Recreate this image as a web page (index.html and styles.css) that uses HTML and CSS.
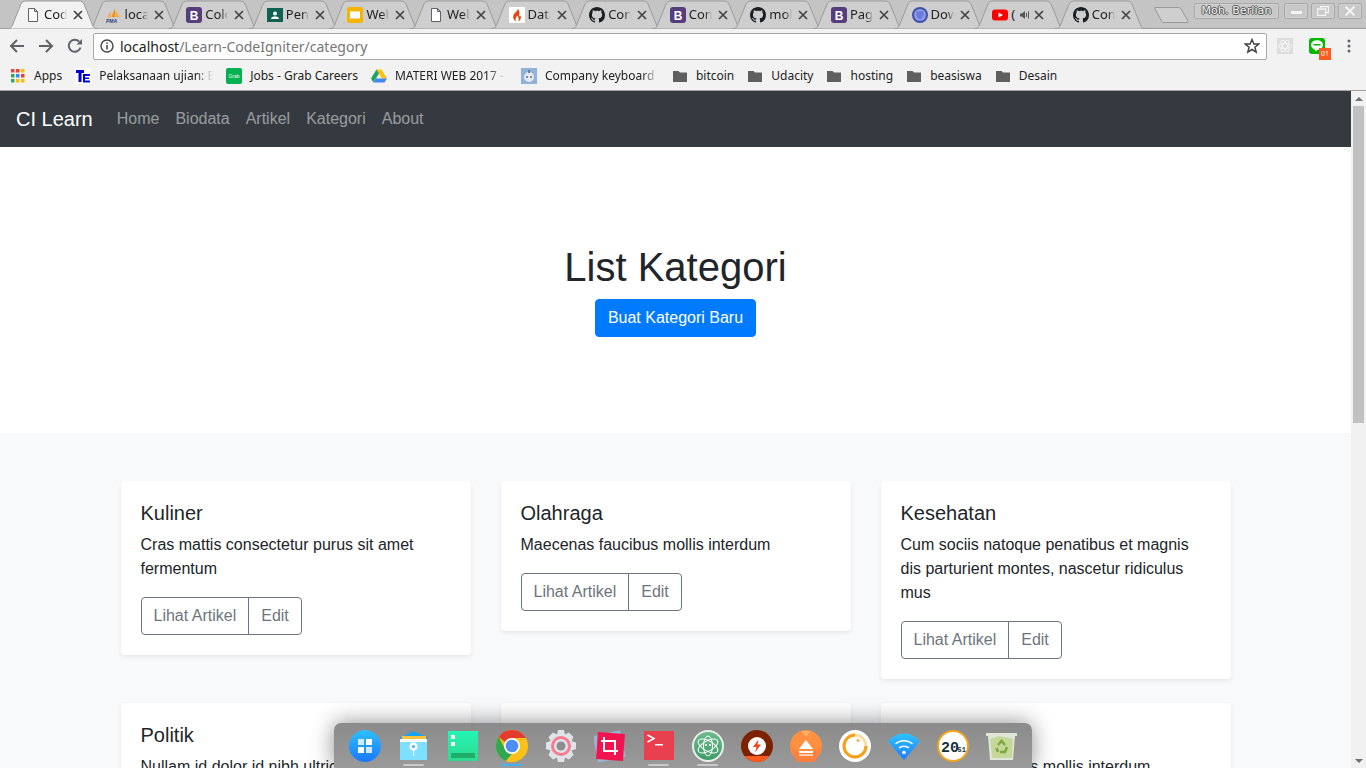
FILE: index.html
```html
<!DOCTYPE html>
<html lang="id">
<head>
<meta charset="utf-8">
<title>List Kategori</title>
<link rel="stylesheet" href="styles.css">
</head>
<body>
<svg class="defs" width="0" height="0" aria-hidden="true">
  <defs>
    <symbol id="tabshape" viewBox="0 0 91 29" preserveAspectRatio="none"><path d="M0 29C3 29 4.500 27.500 5.500 25L14 4C15 2 16.500 1 19 1H72C74.500 1 76 2 77 4L85.500 25C86.500 27.500 88 29 91 29Z"/></symbol>
    <symbol id="doc" viewBox="0 0 16 16"><path d="M3.500 1.500H9.500L12.500 4.500V14.500H3.500Z M9.500 1.500V4.500H12.500" fill="#fff" stroke="#5f6368" stroke-width="1"/></symbol>
    <symbol id="pma" viewBox="0 0 16 16"><path d="M1 10L5 4V10Z" fill="#f8a94a"/><path d="M5.500 10L9 1V10Z" fill="#f29111"/><path d="M9.500 10V3L13 10Z" fill="#f6a740"/><path d="M13 6L15.500 10H13.500Z" fill="#f8b766"/><text x="0" y="15.500" class="pmatext">PMA</text></symbol>
    <symbol id="boot" viewBox="0 0 16 16"><rect width="16" height="16" rx="3" fill="#563d7c"/><text x="8" y="12.500" class="boottext">B</text></symbol>
    <symbol id="room" viewBox="0 0 16 16"><rect y="1" width="16" height="14" fill="#0f6152"/><circle cx="8" cy="6.500" r="2" fill="#fff"/><path d="M4 12C4 10 6 9.500 8 9.500S12 10 12 12Z" fill="#fff"/></symbol>
    <symbol id="slides" viewBox="0 0 16 16"><rect width="16" height="16" rx="2.500" fill="#f4b400"/><rect x="3" y="4.500" width="10" height="7" fill="#fff"/></symbol>
    <symbol id="flame" viewBox="0 0 16 16"><rect width="16" height="16" fill="#fff"/><path d="M8.500 1.500C9.500 4 6 5 4.500 8C3.500 10.500 5 13.500 7 14.500C6 12.500 6.500 10.500 8.500 8.500C8.500 10 10.500 10.500 9.500 14.500C11.500 13.500 12.500 11 11.500 8.500C11 9.500 10.500 9.500 10 9C11 6 10.500 3.500 8.500 1.500Z" fill="#dd4814"/></symbol>
    <symbol id="github" viewBox="0 0 16 16"><path fill="#1b1f23" d="M8 0C3.580 0 0 3.580 0 8c0 3.540 2.290 6.530 5.470 7.590.4.070.55-.17.55-.38 0-.19-.01-.82-.01-1.490-2.010.37-2.530-.49-2.690-.94-.09-.23-.48-.94-.82-1.130-.28-.15-.68-.52-.01-.53.63-.01 1.080.58 1.230.82.72 1.210 1.870.87 2.330.66.07-.52.28-.87.51-1.070-1.780-.2-3.640-.89-3.640-3.950 0-.87.31-1.590.82-2.150-.08-.2-.36-1.020.08-2.120 0 0 .67-.21 2.200.82.64-.18 1.320-.27 2-.27.68 0 1.360.09 2 .27 1.530-1.040 2.200-.82 2.200-.82.44 1.100.16 1.920.08 2.120.51.56.82 1.270.82 2.150 0 3.070-1.870 3.750-3.650 3.950.29.25.54.73.54 1.480 0 1.070-.01 1.930-.01 2.200 0 .21.15.46.55.38A8.013 8.013 0 0016 8c0-4.420-3.580-8-8-8z"/></symbol>
    <symbol id="globe" viewBox="0 0 16 16"><circle cx="8" cy="8" r="8" fill="#3f4fa8"/><circle cx="8" cy="8" r="6" fill="#8f9be8"/><path d="M5 4.500L10.500 4L12 7.500L9 12.500L6 11.500L4 8Z" fill="#6c7adb"/></symbol>
    <symbol id="yt" viewBox="0 0 16 16"><rect y="2.500" width="16" height="11" rx="3" fill="#f00"/><path d="M6.500 5.500L11 8L6.500 10.500Z" fill="#fff"/></symbol>
    <symbol id="x" viewBox="0 0 10 10"><path d="M1 1L9 9M9 1L1 9" stroke="#444" stroke-width="1.700" fill="none"/></symbol>
    <symbol id="folder" viewBox="0 0 16 16"><path d="M1 3H6.500L8 4.500H15V14H1Z" fill="#5f5f5f"/></symbol>

    <symbol id="d-launch" viewBox="0 0 32 32"><defs><linearGradient id="g1" x1="0" y1="0" x2="0" y2="1"><stop offset="0" stop-color="#2cc0ff"/><stop offset="1" stop-color="#1a78ff"/></linearGradient></defs><circle cx="16" cy="16" r="16" fill="url(#g1)"/><rect x="9" y="9" width="6" height="6" fill="#cfeaff"/><rect x="17" y="9" width="6" height="6" fill="#fff"/><rect x="9" y="17" width="6" height="6" fill="#fff"/><rect x="17" y="17" width="6" height="6" fill="#cfeaff"/></symbol>
    <symbol id="d-files" viewBox="0 0 32 32"><path d="M2 8L15 1L29 7V28H2Z" fill="#16a3f5"/><rect x="4" y="6" width="24" height="4" fill="#f6c33c"/><rect x="2" y="9" width="27" height="21" fill="#7ee0ff"/><rect x="2" y="9" width="27" height="3" fill="#fff"/><circle cx="15.500" cy="16.500" r="4" fill="#fff"/><circle cx="15.500" cy="16.500" r="1.500" fill="#3fb4e0"/><rect x="15" y="20" width="1.200" height="6" fill="#fff"/></symbol>
    <symbol id="d-panel" viewBox="0 0 32 32"><defs><linearGradient id="g2" x1="0" y1="0" x2="0" y2="1"><stop offset="0" stop-color="#22f5b4"/><stop offset="1" stop-color="#30d98f"/></linearGradient></defs><rect x="1" y="1" width="30" height="30" fill="url(#g2)"/><rect x="4" y="5" width="4" height="4" fill="#fff"/><rect x="4" y="12" width="4" height="4" fill="#fff"/><rect x="4" y="23" width="24" height="5" fill="#20ad6b"/></symbol>
    <symbol id="d-chrome" viewBox="0 0 32 32"><circle cx="16" cy="16" r="16" fill="#fbc116"/><path d="M16 0A16 16 0 0 1 29.860 8H16A8 8 0 0 0 9 12L2.800 7A16 16 0 0 1 16 0Z" fill="#e33b2e"/><path d="M2.800 7L9.500 20A8 8 0 0 0 16 24L10 31A16 16 0 0 1 2.800 7Z" fill="#2fa84f"/><path d="M10 31L16 24A8 8 0 0 0 23 12H29.860A16 16 0 0 1 14 32Z" fill="#fbc116"/><circle cx="16" cy="16" r="8" fill="#fff"/><circle cx="16" cy="16" r="6.300" fill="#4c8ef5"/></symbol>
    <symbol id="d-gear" viewBox="0 0 32 32"><path d="M13 0H19L20 4.500L24 2.500L28.500 7L26.500 11L31 12.500V19L26.500 20.500L28.500 25L24 29.500L20 27.500L19 32H13L12 27.500L8 29.500L3.500 25L5.500 20.500L1 19V12.500L5.500 11L3.500 7L8 2.500L12 4.500Z" fill="#dfe3ea"/><circle cx="16" cy="16" r="10" fill="#f77d8e"/><circle cx="16" cy="16" r="7" fill="#dfe3ea"/><circle cx="16" cy="16" r="4.500" fill="#8d8d8d"/></symbol>
    <symbol id="d-crop" viewBox="0 0 32 32"><rect x="1" y="3" width="28" height="27" fill="#9cc0e6" opacity=".75" transform="rotate(-12 15 16)"/><rect x="3" y="3" width="27" height="27" fill="#f2134f" transform="rotate(4 16 16)"/><path d="M10 7V21H24M7 11H21V25" stroke="#fff" stroke-width="2" fill="none"/></symbol>
    <symbol id="d-term" viewBox="0 0 32 32"><rect x="1" y="1" width="30" height="29" fill="#e8404f"/><path d="M4.500 5L11 8.500L4.500 12" stroke="#fff" stroke-width="1.500" fill="none"/><rect x="12" y="14" width="8" height="1.500" fill="#fff"/></symbol>
    <symbol id="d-atom" viewBox="0 0 32 32"><defs><linearGradient id="g3" x1="0" y1="0" x2="0" y2="1"><stop offset="0" stop-color="#6dbb8c"/><stop offset="1" stop-color="#3f9a68"/></linearGradient></defs><circle cx="16" cy="16" r="15" fill="url(#g3)" stroke="#e8efe9" stroke-width="2"/><g fill="none" stroke="#fff" stroke-width="1"><ellipse cx="16" cy="16" rx="11" ry="5" transform="rotate(30 16 16)"/><ellipse cx="16" cy="16" rx="11" ry="5" transform="rotate(-30 16 16)"/><ellipse cx="16" cy="16" rx="4.500" ry="10"/></g><circle cx="14" cy="15" r="1" fill="#fff"/><circle cx="18" cy="15" r="1" fill="#fff"/></symbol>
    <symbol id="d-bolt" viewBox="0 0 32 32"><clipPath id="c1"><circle cx="16" cy="16" r="16"/></clipPath><g clip-path="url(#c1)"><rect width="32" height="32" fill="#7c2200"/><rect y="26" width="32" height="6" fill="#ff5a1f"/></g><circle cx="16" cy="16" r="9" fill="#fff"/><path d="M17.500 9.500L12 17H15.500L14 22.500L20 14.500H16.500Z" fill="#f0421c"/></symbol>
    <symbol id="d-eject" viewBox="0 0 32 32"><circle cx="16" cy="16" r="16" fill="#ff9040"/><path d="M11 1H21L16 7Z" fill="#ffb066"/><path d="M0 16L6 32H26L32 16L24 22H8Z" fill="#ff7a3a" opacity=".7"/><path d="M16 10L23 19H9Z" fill="#fff"/><rect x="9" y="21" width="14" height="2" fill="#fff"/><rect x="9" y="24.500" width="14" height="1.200" fill="#fff"/></symbol>
    <symbol id="d-ring" viewBox="0 0 32 32"><circle cx="16" cy="16" r="16" fill="#fff"/><circle cx="16" cy="16" r="11" fill="none" stroke="#f8dfa8" stroke-width="3"/><path d="M16 5A11 11 0 1 0 27 16" fill="none" stroke="#f7a11a" stroke-width="3"/><circle cx="19" cy="10.500" r="1.300" fill="#f7a11a"/></symbol>
    <symbol id="d-wifi" viewBox="0 0 32 32"><defs><linearGradient id="g4" x1="0" y1="0" x2="0" y2="1"><stop offset="0" stop-color="#2cc4ff"/><stop offset="1" stop-color="#1d7bff"/></linearGradient></defs><path d="M0 11.500C4 6.500 10 3.500 16 3.500S28 6.500 32 11.500L16 30Z" fill="url(#g4)"/><g fill="none" stroke="#fff" stroke-width="1.500"><path d="M7.500 14C12 9.500 20 9.500 24.500 14"/><path d="M11 18C13.500 15.500 18.500 15.500 21 18"/></g><circle cx="16" cy="22.500" r="1.800" fill="#fff"/></symbol>
    <symbol id="d-clock" viewBox="0 0 32 32"><circle cx="16" cy="16" r="15" fill="#fff" stroke="#f4a51c" stroke-width="2"/><text x="4" y="22" class="clockbig">20</text><text x="20.500" y="22" class="clocksmall">51</text></symbol>
    <symbol id="d-trash" viewBox="0 0 32 32"><path d="M0 3H31V6H29L27 30H4L2 6H0Z" fill="#e8efe0" opacity=".9"/><path d="M4 9L13 6L27 9L26 28H6Z" fill="#b9d27f" opacity=".7"/><g fill="none" stroke="#7ea83f" stroke-width="2.500"><path d="M12 15L15.500 11L19 15"/><path d="M21 17L19 22H14"/><path d="M12 22L10.500 18"/></g></symbol>
  </defs>
</svg>

<div class="window">
  <header class="chrome">
    <div class="tabstrip">
      <div class="tabs">
        <div class="tab tab-active"><svg class="tabbg"><use href="#tabshape"/></svg><svg class="fav"><use href="#doc"/></svg><span class="tabtitle">Code</span><svg class="close"><use href="#x"/></svg></div>
        <div class="tab"><svg class="tabbg"><use href="#tabshape"/></svg><svg class="fav"><use href="#pma"/></svg><span class="tabtitle">local</span><svg class="close"><use href="#x"/></svg></div>
        <div class="tab"><svg class="tabbg"><use href="#tabshape"/></svg><svg class="fav"><use href="#boot"/></svg><span class="tabtitle">Color</span><svg class="close"><use href="#x"/></svg></div>
        <div class="tab"><svg class="tabbg"><use href="#tabshape"/></svg><svg class="fav"><use href="#room"/></svg><span class="tabtitle">Peng</span><svg class="close"><use href="#x"/></svg></div>
        <div class="tab"><svg class="tabbg"><use href="#tabshape"/></svg><svg class="fav"><use href="#slides"/></svg><span class="tabtitle">Web</span><svg class="close"><use href="#x"/></svg></div>
        <div class="tab"><svg class="tabbg"><use href="#tabshape"/></svg><svg class="fav"><use href="#doc"/></svg><span class="tabtitle">Web</span><svg class="close"><use href="#x"/></svg></div>
        <div class="tab"><svg class="tabbg"><use href="#tabshape"/></svg><svg class="fav"><use href="#flame"/></svg><span class="tabtitle">Data</span><svg class="close"><use href="#x"/></svg></div>
        <div class="tab"><svg class="tabbg"><use href="#tabshape"/></svg><svg class="fav"><use href="#github"/></svg><span class="tabtitle">Cont</span><svg class="close"><use href="#x"/></svg></div>
        <div class="tab"><svg class="tabbg"><use href="#tabshape"/></svg><svg class="fav"><use href="#boot"/></svg><span class="tabtitle">Cont</span><svg class="close"><use href="#x"/></svg></div>
        <div class="tab"><svg class="tabbg"><use href="#tabshape"/></svg><svg class="fav"><use href="#github"/></svg><span class="tabtitle">moh</span><svg class="close"><use href="#x"/></svg></div>
        <div class="tab"><svg class="tabbg"><use href="#tabshape"/></svg><svg class="fav"><use href="#boot"/></svg><span class="tabtitle">Page</span><svg class="close"><use href="#x"/></svg></div>
        <div class="tab"><svg class="tabbg"><use href="#tabshape"/></svg><svg class="fav"><use href="#globe"/></svg><span class="tabtitle">Down</span><svg class="close"><use href="#x"/></svg></div>
        <div class="tab"><svg class="tabbg"><use href="#tabshape"/></svg><svg class="fav"><use href="#yt"/></svg><span class="tabtitle tabtitle-short">(</span><svg class="speaker" viewBox="0 0 10 10"><path d="M0 3.500H2L5 1V9L2 6.500H0Z" fill="#555"/><path d="M6.500 3V7M8.500 1.500V8.500" stroke="#555"/></svg><svg class="close"><use href="#x"/></svg></div>
        <div class="tab"><svg class="tabbg"><use href="#tabshape"/></svg><svg class="fav"><use href="#github"/></svg><span class="tabtitle">Cont</span><svg class="close"><use href="#x"/></svg></div>
        <svg class="newtab" viewBox="0 0 36 18"><path d="M1 1.500H24C25.500 1.500 26.500 2 27 3L34 15C34.500 16 34 16.500 33 16.500H10C9 16.500 8 16 7.500 15L1 3C.5 2 .5 1.500 1 1.500Z" fill="#cfcfcf" stroke="#9a9a9a"/></svg>
      </div>
      <div class="winctrls">
        <div class="winbtn winbtn-user">Moh. Berlian</div>
        <div class="winbtn winbtn-min"><span class="glyph-min"></span></div>
        <div class="winbtn winbtn-res"><svg class="glyph" viewBox="0 0 12 10"><path d="M3.500 2.500V.5H11.500V6.500H8.500M.5 3H8.500V9.500H.5Z" fill="none" stroke="#f4f4f4" stroke-width="1.300"/></svg></div>
        <div class="winbtn winbtn-cls"><svg class="glyph" viewBox="0 0 12 10"><path d="M1.500 .5L10.500 9.500M10.500 .5L1.500 9.500" stroke="#f4f4f4" stroke-width="2"/></svg></div>
      </div>
    </div>

    <div class="toolbar">
      <svg class="navicon" viewBox="0 0 16 16"><path d="M15 8H2M8 2L2 8L8 14" fill="none" stroke="#5f6368" stroke-width="2"/></svg>
      <svg class="navicon" viewBox="0 0 16 16"><path d="M1 8H14M8 2L14 8L8 14" fill="none" stroke="#5f6368" stroke-width="2"/></svg>
      <svg class="navicon" viewBox="0 0 16 16"><path d="M13.500 9.500A6 6 0 1 1 12.200 3.700" fill="none" stroke="#5f6368" stroke-width="2"/><path d="M9.500 6.500H15V1Z" fill="#5f6368"/></svg>
      <div class="omnibox">
        <svg class="infoicon" viewBox="0 0 14 14"><circle cx="7" cy="7" r="6" fill="none" stroke="#444" stroke-width="1.400"/><rect x="6.300" y="6" width="1.500" height="4.500" fill="#444"/><rect x="6.300" y="3.500" width="1.500" height="1.500" fill="#444"/></svg>
        <span class="url"><span class="url-host">localhost</span>/Learn-CodeIgniter/category</span>
        <svg class="star" viewBox="0 0 16 16"><path d="M8 1.500L9.900 6H14.800L10.900 9.200L12.200 14.200L8 11.500L3.800 14.200L5.100 9.200L1.200 6H6.100Z" fill="none" stroke="#444" stroke-width="1.500"/></svg>
      </div>
      <div class="exts">
        <span class="ext ext-react"><svg viewBox="0 0 16 16" class="ext-svg"><rect width="16" height="16" fill="#dcdcdc"/><g fill="none" stroke="#f6f6f6"><ellipse cx="8" cy="8" rx="6.500" ry="2.500"/><ellipse cx="8" cy="8" rx="6.500" ry="2.500" transform="rotate(60 8 8)"/><ellipse cx="8" cy="8" rx="6.500" ry="2.500" transform="rotate(120 8 8)"/></g></svg></span>
        <span class="ext ext-line"><svg viewBox="0 0 16 16" class="ext-svg"><rect width="16" height="16" rx="3" fill="#00b900"/><ellipse cx="8" cy="7" rx="6" ry="4.800" fill="#fff"/><path d="M6 11H9L6.500 13.500Z" fill="#fff"/><rect x="4.500" y="6" width="7" height="1.500" fill="#00b900"/></svg><span class="badge">01</span></span>
        <svg class="dots" viewBox="0 0 4 16"><circle cx="2" cy="3" r="1.500" fill="#5f6368"/><circle cx="2" cy="8" r="1.500" fill="#5f6368"/><circle cx="2" cy="13" r="1.500" fill="#5f6368"/></svg>
      </div>
    </div>

    <nav class="bookmarks">
      <a class="bm"><svg class="bmicon" viewBox="0 0 16 16"><g><rect x="1" y="1" width="3.500" height="3.500" fill="#ea4335"/><rect x="6" y="1" width="3.500" height="3.500" fill="#ea4335"/><rect x="11" y="1" width="3.500" height="3.500" fill="#fbbc05"/><rect x="1" y="6" width="3.500" height="3.500" fill="#34a853"/><rect x="6" y="6" width="3.500" height="3.500" fill="#4285f4"/><rect x="11" y="6" width="3.500" height="3.500" fill="#ea4335"/><rect x="1" y="11" width="3.500" height="3.500" fill="#34a853"/><rect x="6" y="11" width="3.500" height="3.500" fill="#fbbc05"/><rect x="11" y="11" width="3.500" height="3.500" fill="#fbbc05"/></g></svg><span>Apps</span></a>
      <a class="bm"><svg class="bmicon" viewBox="0 0 16 16"><rect width="16" height="16" fill="#fff"/><path d="M1 2H9V5H6.500V14H3.500V5H1Z" fill="#0000d8"/><path d="M8 6H15V8H10V9.500H14V11H10V12.500H15V14.500H8Z" fill="#0000d8"/></svg><span class="bm-fade bm-w114">Pelaksanaan ujian: Bahasa</span></a>
      <a class="bm"><svg class="bmicon" viewBox="0 0 16 16"><rect width="16" height="16" rx="2" fill="#00b14f"/><text x="8" y="10" class="grabtext">Grab</text></svg><span>Jobs - Grab Careers</span></a>
      <a class="bm"><svg class="bmicon" viewBox="0 0 16 16"><path d="M5.500 1.500H10.500L16 10.500H11Z" fill="#ffc107"/><path d="M5.500 1.500L0 10.500L2.500 14.500L8 5.500Z" fill="#1fa463"/><path d="M2.500 14.500H13.500L16 10.500H5Z" fill="#4285f4"/></svg><span class="bm-fade bm-w110">MATERI WEB 2017 - 2018</span></a>
      <a class="bm bm-company"><svg class="bmicon" viewBox="0 0 16 16"><rect width="16" height="16" fill="#8fb2dc"/><circle cx="8" cy="9" r="5" fill="#e6eaf0"/><rect x="7" y="2" width="2" height="3" fill="#6b7d94"/><circle cx="6" cy="9" r="1" fill="#5a6b80"/><circle cx="10" cy="9" r="1" fill="#5a6b80"/></svg><span class="bm-fade bm-w114">Company keyboard t</span></a>
      <a class="bm"><svg class="bmicon"><use href="#folder"/></svg><span>bitcoin</span></a>
      <a class="bm"><svg class="bmicon"><use href="#folder"/></svg><span>Udacity</span></a>
      <a class="bm"><svg class="bmicon"><use href="#folder"/></svg><span>hosting</span></a>
      <a class="bm"><svg class="bmicon"><use href="#folder"/></svg><span>beasiswa</span></a>
      <a class="bm"><svg class="bmicon"><use href="#folder"/></svg><span>Desain</span></a>
    </nav>
  </header>

  <div class="viewport">
    <main class="page">
      <nav class="navbar">
        <a class="brand">CI Learn</a>
        <a class="navlink">Home</a>
        <a class="navlink">Biodata</a>
        <a class="navlink">Artikel</a>
        <a class="navlink">Kategori</a>
        <a class="navlink">About</a>
      </nav>
      <section class="jumbotron">
        <h1 class="jumbo-title">List Kategori</h1>
        <a class="btn-primary">Buat Kategori Baru</a>
      </section>
      <section class="album">
        <div class="grid">
          <article class="card"><h5 class="card-title">Kuliner</h5><p class="card-text">Cras mattis consectetur purus sit amet fermentum</p><div class="btn-group"><a class="btn">Lihat Artikel</a><a class="btn">Edit</a></div></article>
          <article class="card"><h5 class="card-title">Olahraga</h5><p class="card-text">Maecenas faucibus mollis interdum</p><div class="btn-group"><a class="btn">Lihat Artikel</a><a class="btn">Edit</a></div></article>
          <article class="card"><h5 class="card-title">Kesehatan</h5><p class="card-text">Cum sociis natoque penatibus et magnis dis parturient montes, nascetur ridiculus mus</p><div class="btn-group"><a class="btn">Lihat Artikel</a><a class="btn">Edit</a></div></article>
          <article class="card"><h5 class="card-title">Politik</h5><p class="card-text">Nullam id dolor id nibh ultricies vehicula ut id elit</p><div class="btn-group"><a class="btn">Lihat Artikel</a><a class="btn">Edit</a></div></article>
          <article class="card"><h5 class="card-title">Ekonomi</h5><p class="card-text">Cras mattis consectetur purus sit amet fermentum</p><div class="btn-group"><a class="btn">Lihat Artikel</a><a class="btn">Edit</a></div></article>
          <article class="card"><h5 class="card-title">Travel</h5><p class="card-text">Maecenas faucibus mollis interdum</p><div class="btn-group"><a class="btn">Lihat Artikel</a><a class="btn">Edit</a></div></article>
        </div>
      </section>
    </main>
    <aside class="scrollbar">
      <span class="arrow-up"></span>
      <span class="thumb"></span>
      <span class="arrow-down"></span>
    </aside>
  </div>

  <div class="dock">
    <span class="dockitem"><svg class="dockicon"><use href="#d-launch"/></svg></span>
    <span class="dockitem dockitem-on"><svg class="dockicon"><use href="#d-files"/></svg></span>
    <span class="dockitem"><svg class="dockicon"><use href="#d-panel"/></svg></span>
    <span class="dockitem dockitem-active"><svg class="dockicon"><use href="#d-chrome"/></svg></span>
    <span class="dockitem"><svg class="dockicon"><use href="#d-gear"/></svg></span>
    <span class="dockitem"><svg class="dockicon"><use href="#d-crop"/></svg></span>
    <span class="dockitem dockitem-on"><svg class="dockicon"><use href="#d-term"/></svg></span>
    <span class="dockitem dockitem-on"><svg class="dockicon"><use href="#d-atom"/></svg></span>
    <span class="dockitem"><svg class="dockicon"><use href="#d-bolt"/></svg></span>
    <span class="dockitem"><svg class="dockicon"><use href="#d-eject"/></svg></span>
    <span class="dockitem"><svg class="dockicon"><use href="#d-ring"/></svg></span>
    <span class="dockitem"><svg class="dockicon"><use href="#d-wifi"/></svg></span>
    <span class="dockitem"><svg class="dockicon"><use href="#d-clock"/></svg></span>
    <span class="dockitem"><svg class="dockicon"><use href="#d-trash"/></svg></span>
  </div>
</div>
</body>
</html>
```

FILE: styles.css
```css
* { box-sizing: border-box; }
html, body { margin: 0; height: 100%; overflow: hidden; }
body { font-family: "Liberation Sans", Arial, sans-serif; font-size: 16px; line-height: 1.5; color: #212529; background: #fff; }
.defs { position: absolute; }

.window { position: relative; height: 768px; display: flex; flex-direction: column; overflow: hidden; }

/* browser chrome */
.chrome { flex: none; height: 91px; font-family: "Noto Sans", sans-serif; background: #f2f2f2; border-bottom: 1px solid #a3a3a3; }
.tabstrip { height: 29px; display: flex; justify-content: space-between; background: #c4c4c4; border-bottom: 1px solid #a0a0a0; }
.tabs { display: flex; padding-left: 7px; }
.tab { position: relative; flex: none; width: 90.6px; height: 29px; margin-right: -10px; display: flex; align-items: center; padding: 0 15px 0 18px; font-size: 13px; color: #222; }
.tabbg { position: absolute; left: 0; top: 0; width: 91px; height: 29px; fill: #cecece; stroke: #9b9b9b; stroke-width: 1; overflow: visible; }
.tab-active { z-index: 2; }
.tab-active .tabbg { fill: #f2f2f2; }
.fav { position: relative; flex: none; width: 16px; height: 16px; margin-right: 3px; }
.tabtitle { position: relative; flex: none; width: 22px; margin-left: 0; overflow: hidden; white-space: nowrap; line-height: 29px; -webkit-mask-image: linear-gradient(to right, #000 70%, transparent 100%); mask-image: linear-gradient(to right, #000 70%, transparent 100%); }
.tabtitle { width: 23px; }
.tabtitle-short { width: 6px; -webkit-mask-image: none; mask-image: none; }
.speaker { position: relative; flex: none; width: 10px; height: 10px; margin-left: 3px; margin-right: -2px; }
.close { position: relative; flex: none; width: 10px; height: 10px; margin-left: 6px; }
.newtab { flex: none; width: 36px; height: 18px; margin: 6px 0 0 19px; position: relative; z-index: 1; }
.pmatext { font: italic bold 5px "Liberation Sans", sans-serif; fill: #2a3b7a; }
.boottext { font: bold 12px "Liberation Sans", sans-serif; fill: #fff; text-anchor: middle; }
.grabtext { font: 5px "Liberation Sans", sans-serif; fill: #fff; text-anchor: middle; }
.clockbig { font: bold 15px "Liberation Mono", monospace; fill: #15303a; }
.clocksmall { font: bold 7px "Liberation Mono", monospace; fill: #15303a; }

.winctrls { display: flex; gap: 3px; padding: 3px 4px 0 0; height: 20px; }
.winbtn { height: 16px; width: 24px; display: flex; align-items: center; justify-content: center; background: #c8c8c8; border: 1px solid #a8a8a8; border-radius: 2px; box-shadow: inset 0 0 0 1px #d0d0d0; }
.winbtn-user { width: 85px; margin-right: 2px; font-size: 11px; color: #f4f4f4; font-family: "DejaVu Sans", sans-serif; text-shadow: 1px 0 0 #555, -1px 0 0 #555, 0 1px 0 #555, 0 -1px 0 #555; letter-spacing: .1px; }
.glyph { width: 12px; height: 10px; }
.glyph-min { width: 11px; height: 3px; background: #f4f4f4; margin-top: 3px; }

.toolbar { height: 33px; display: flex; align-items: center; padding: 0 10px 0 9px; }
.navicon { flex: none; width: 16px; height: 16px; margin-right: 13px; }
.navicon:nth-child(3) { margin-right: 10px; }
.omnibox { flex: none; width: 1174px; height: 27px; margin-top: 1px; display: flex; align-items: center; padding: 0 6px; background: #fff; border: 1px solid #a9a9a9; border-radius: 2px; }
.infoicon { flex: none; width: 14px; height: 14px; margin-right: 6px; }
.url { flex: 1; font-size: 14px; color: #767676; white-space: nowrap; }
.url-host { color: #222; }
.star { flex: none; width: 16px; height: 16px; }
.exts { flex: none; display: flex; align-items: center; margin-left: 10px; }
.ext { position: relative; width: 16px; height: 16px; margin-right: 16px; display: block; }
.ext-svg { display: block; width: 16px; height: 16px; }
.badge { position: absolute; left: 10px; top: 10px; width: 12px; height: 12px; background: #ff5a1f; color: #fff; font-size: 7px; line-height: 12px; text-align: center; }
.dots { flex: none; width: 4px; height: 16px; margin-left: 6px; }

.bookmarks { height: 28px; display: flex; align-items: center; padding-left: 10px; font-size: 12px; color: #222; }
.bm { display: flex; align-items: center; gap: 8px; margin-right: 13px; white-space: nowrap; }
.bm:first-child { gap: 8px; }
.bm-company { margin-left: 3px; }
.bmicon { flex: none; width: 16px; height: 16px; }
.bm-fade { display: block; overflow: hidden; -webkit-mask-image: linear-gradient(to right, #000 85%, transparent 100%); mask-image: linear-gradient(to right, #000 85%, transparent 100%); }
.bm-w114 { width: 114px; }
.bm-w110 { width: 110px; }

/* page area */
.viewport { flex: 1; min-height: 0; display: flex; }
.page { flex: 1; min-width: 0; overflow: hidden; }

.navbar { height: 56px; display: flex; align-items: center; padding: 0 16px; background: #343a40; }
.brand { margin-right: 16px; font-size: 20px; color: #fff; }
.navlink { padding: 0 8px; color: rgba(255, 255, 255, .5); }

.jumbotron { padding: 96px 0; text-align: center; background: #fff; }
.jumbo-title { margin: 0 0 8px; font-size: 40px; font-weight: 400; line-height: 1.2; }
.btn-primary { display: inline-block; padding: 6px 12px; color: #fff; background: #007bff; border: 1px solid #007bff; border-radius: 4px; }

.album { padding: 48px 0; background: #f8f9fa; }
.grid { width: 1110px; margin: 0 auto; display: grid; grid-template-columns: repeat(3, 350px); column-gap: 30px; align-items: start; }
.card { margin-bottom: 24px; padding: 20px; background: #fff; border-radius: 4px; box-shadow: 0 2px 4px rgba(0, 0, 0, .075); }
.card-title { margin: 0 0 8px; font-size: 20px; font-weight: 400; line-height: 1.2; }
.card-text { margin: 0 0 16px; }
.btn-group { display: inline-flex; vertical-align: middle; }
.btn { padding: 6px 12px; color: #6c757d; border: 1px solid #6c757d; white-space: nowrap; }
.btn:first-child { border-radius: 4px 0 0 4px; }
.btn:last-child { margin-left: -1px; border-radius: 0 4px 4px 0; }

.scrollbar { flex: none; width: 15px; position: relative; display: flex; flex-direction: column; align-items: center; background: #f1f1f1; }
.arrow-up { flex: none; margin-top: 6px; width: 0; height: 0; border-left: 4px solid transparent; border-right: 4px solid transparent; border-bottom: 4px solid #6f6f6f; }
.thumb { flex: none; margin-top: 5px; width: 11px; height: 317px; background: #c1c1c1; }
.arrow-down { flex: none; margin-top: auto; margin-bottom: 5px; width: 0; height: 0; border-left: 4px solid transparent; border-right: 4px solid transparent; border-top: 4px solid #6f6f6f; }

/* desktop dock, floats over the browser window */
.dock { position: absolute; left: 334px; bottom: 0; width: 698px; height: 45px; display: flex; padding: 7px 6px 0 6px; background: linear-gradient(#8b8b8b, #9a9a9a); border-radius: 7px 7px 0 0; box-shadow: 0 0 22px rgba(0, 0, 0, .45); }
.dockitem { position: relative; flex: none; width: 49px; display: flex; justify-content: center; }
.dockicon { width: 32px; height: 32px; }
.dockitem-on::after, .dockitem-active::after { content: ""; position: absolute; left: 14px; bottom: 2px; width: 21px; height: 2px; border-radius: 1px; background: #c9c9c9; }
.dockitem-active::after { background: #3fb2f2; }
```
